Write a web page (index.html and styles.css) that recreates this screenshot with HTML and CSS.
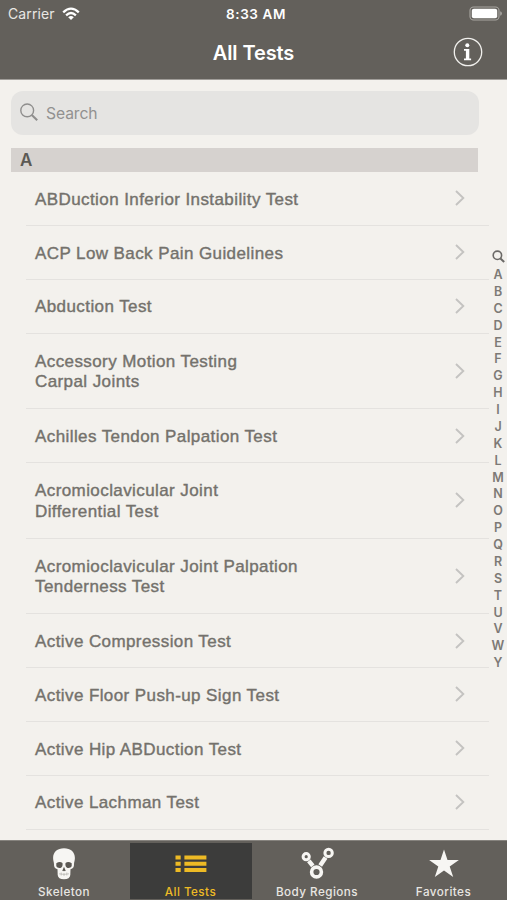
FILE: index.html
```html
<!DOCTYPE html>
<html lang="en">
<head>
<meta charset="utf-8">
<title>All Tests</title>
<link rel="stylesheet" href="styles.css">
</head>
<body>
<svg class="defs" width="0" height="0"><symbol id="chev" viewBox="0 0 12 18"><path d="M2 2l7.3 7L2 16" fill="none" stroke="#c4c3c1" stroke-width="1.9"/></symbol></svg>
<header class="header">
  <div class="status">
    <div class="carrier"><span>Carrier</span>
      <svg width="18" height="14" viewBox="0 0 18 14"><g fill="none" stroke="#fff" stroke-width="2.3"><path d="M1.2 5.3Q9 -2 16.8 5.3"/><path d="M4.1 8.3Q9 3.8 13.9 8.3"/></g><path d="M6.2 10.2Q9 8 11.8 10.2L9 13z" fill="#fff"/></svg>
    </div>
    <div class="time">8:33 AM</div>
    <svg class="battery" width="33" height="15" viewBox="0 0 33 15"><rect x="1" y="1" width="29" height="13" rx="3.6" fill="none" stroke="#a9a6a2" stroke-width="1.1"/><rect x="2.8" y="2.8" width="25.4" height="9.4" rx="2" fill="#fff"/><path d="M31.2 5.2q1.7 .6 1.7 2.3t-1.7 2.3z" fill="#a9a6a2"/></svg>
  </div>
  <div class="navbar">
    <h1>All Tests</h1>
    <svg class="info" width="30" height="30" viewBox="0 0 30 30"><circle cx="15" cy="15" r="13.7" fill="none" stroke="#f1f0ed" stroke-width="1.3"/><circle cx="14.3" cy="8.2" r="2" fill="#fff"/><path d="M11 12h5.3v9.4h1.8v1.8H11v-1.8h1.9v-7.6H11z" fill="#fff"/></svg>
  </div>
</header>
<main class="main">
  <section class="content">
    <div class="search"><svg width="20" height="20" viewBox="0 0 20 20" fill="none" stroke="#8f8e8d"><circle cx="7.2" cy="7.4" r="6.4" stroke-width="1.4"/><path d="M11.8 12l5.4 5.2" stroke-width="2.1"/></svg><span>Search</span></div>
    <h2>A</h2>
    <ul class="list">
      <li><span>ABDuction Inferior Instability Test</span><svg><use href="#chev"/></svg></li>
      <li><span>ACP Low Back Pain Guidelines</span><svg><use href="#chev"/></svg></li>
      <li><span>Abduction Test</span><svg><use href="#chev"/></svg></li>
      <li class="tall"><span>Accessory Motion Testing<br>Carpal Joints</span><svg><use href="#chev"/></svg></li>
      <li><span>Achilles Tendon Palpation Test</span><svg><use href="#chev"/></svg></li>
      <li class="tall"><span>Acromioclavicular Joint<br>Differential Test</span><svg><use href="#chev"/></svg></li>
      <li class="tall"><span>Acromioclavicular Joint Palpation<br>Tenderness Test</span><svg><use href="#chev"/></svg></li>
      <li><span>Active Compression Test</span><svg><use href="#chev"/></svg></li>
      <li><span>Active Floor Push-up Sign Test</span><svg><use href="#chev"/></svg></li>
      <li><span>Active Hip ABDuction Test</span><svg><use href="#chev"/></svg></li>
      <li><span>Active Lachman Test</span><svg><use href="#chev"/></svg></li>
    </ul>
  </section>
  <nav class="index">
    <svg width="13" height="13" viewBox="0 0 13 13" fill="none" stroke="#6b6967"><circle cx="5.4" cy="5.3" r="4.2" stroke-width="1.6"/><path d="M8.4 8.4l3.8 3.5" stroke-width="2"/></svg>
    <span>A</span><span>B</span><span>C</span><span>D</span><span>E</span><span>F</span><span>G</span><span>H</span><span>I</span><span>J</span><span>K</span><span>L</span><span>M</span><span>N</span><span>O</span><span>P</span><span>Q</span><span>R</span><span>S</span><span>T</span><span>U</span><span>V</span><span>W</span><span>Y</span>
  </nav>
</main>
<footer class="tabs">
  <div class="tab"><svg width="36" height="36" viewBox="0 0 36 36"><path d="M18 2.3C11.4 2.3 7.1 6 7.1 12c0 2.4.8 4 .9 6-.1 3.2.7 4.6 3.5 5.3l.2 5.6c.2 2.7 2.4 4.3 6.3 4.3s6.1-1.6 6.3-4.3l.2-5.6c2.8-.7 3.6-2.1 3.5-5.3.1-2 .9-3.6.9-6 0-6-4.3-9.7-10.9-9.7z" fill="#f7f6f3"/><g fill="#5b5853"><path d="M10.3 17.2q3.4-2.2 6.2-.3.6 3.8-2 5-3.3.4-4.2-1.7zM25.7 17.2q-3.4-2.2-6.2-.3-.6 3.8 2 5 3.3.4 4.2-1.7z"/><path d="M18 20.8l1.7 3.9q-.8.9-1.7 0-.9.9-1.7 0z"/></g><path d="M13 27.8q5 1.2 10 0M15.2 26.5v3M18 27v3M20.8 26.5v3" fill="none" stroke="#aaa7a2" stroke-width=".6"/></svg><span>Skeleton</span></div>
  <div class="tab active"><svg width="36" height="36" viewBox="0 0 36 36" fill="#edba25"><path d="M2.5 9.5h5.2v4H2.5zM11.4 9.5h22v4h-22zM2.5 15.7h5.2v4H2.5zM11.4 15.7h22v4h-22zM2.5 21.9h5.2v4H2.5zM11.4 21.9h22v4h-22z"/></svg><span>All Tests</span></div>
  <div class="tab"><svg width="36" height="36" viewBox="0 0 36 36" fill="none" stroke="#f7f6f3"><g stroke-width="3"><circle cx="7.2" cy="10.7" r="3.1"/><circle cx="29.6" cy="6.9" r="3.7"/><circle cx="17.5" cy="26" r="4.9" stroke-width="3.6"/></g><path d="M9.8 14.8l4 5M26.6 11.6l-5.4 8" stroke-width="4.4"/></svg><span>Body Regions</span></div>
  <div class="tab"><svg width="36" height="36" viewBox="0 0 36 36"><path d="M18 3.4l3.5 10.5h11.4l-9.2 6.6 3.5 10.6-9.2-6.5-9.2 6.5 3.5-10.6-9.2-6.6h11.4z" fill="#f7f6f3"/></svg><span>Favorites</span></div>
</footer>
</body>
</html>
```
FILE: styles.css
```css
* { box-sizing: border-box; }
body {
  margin: 0;
  width: 507px;
  height: 900px;
  overflow: hidden;
  display: flex;
  flex-direction: column;
  background: #f3f1ed;
  font-family: Inter, "Liberation Sans", sans-serif;
}
.defs { display: none; }
.header {
  height: 80px;
  flex: none;
  background: #63605b;
  border-bottom: 1px solid #a09d99;
  color: #fff;
}
.status {
  height: 27px;
  display: grid;
  grid-template-columns: 1fr auto 1fr;
  align-items: center;
  padding: 0 5px 0 8px;
}
.carrier { display: flex; align-items: center; gap: 7px; font-size: 14px; letter-spacing: .1px; color: #e9e7e4; }
.time { font-size: 13.5px; font-weight: 600; letter-spacing: .6px; padding-left: 2px; }
.battery { justify-self: end; }
.navbar {
  height: 51px;
  display: grid;
  grid-template-columns: 1fr auto 1fr;
  align-items: center;
  padding: 0 24px;
}
h1 { grid-column: 2; margin: 0; font-size: 20px; font-weight: 600; letter-spacing: -.1px; }
.info { justify-self: end; margin-bottom: 2px; }
.main { flex: 1; min-height: 0; display: flex; justify-content: space-between; }
.content { width: 489px; padding: 11px 0 0 11px; }
.search {
  width: 468px;
  height: 44px;
  border-radius: 12px;
  background: #e5e4e2;
  display: flex;
  align-items: center;
  gap: 6px;
  padding-left: 9px;
  color: #929190;
  font-size: 15.7px;
  letter-spacing: -.1px;
}
h2 {
  width: 467px;
  height: 24px;
  margin: 13px 0 0;
  padding-left: 9px;
  background: #d6d2cf;
  color: #5c5954;
  font: 600 17px/25px Inter, sans-serif;
}
.list { list-style: none; margin: 0 0 0 15px; padding: 0; }
.list li {
  height: 53.85px;
  display: flex;
  align-items: center;
  justify-content: space-between;
  padding: 0 23.5px 0 9px;
  border-bottom: 1px solid #e4e2df;
  color: #74716c;
  font: 17px/20.3px "Liberation Sans", sans-serif;
  -webkit-text-stroke: .4px #74716c;
  letter-spacing: .41px;
}
.list .tall { height: 75.6px; }
.list span { padding-top: 3px; }
.list svg { width: 12px; height: 18px; }
.index {
  width: 18px;
  padding-top: 170px;
  display: flex;
  flex-direction: column;
  align-items: center;
  color: #7d7a76;
  font-size: 12.5px;
  font-weight: 600;
  line-height: 16.87px;
}
.index svg { margin-bottom: 4px; flex: none; }
.tabs {
  height: 60px;
  flex: none;
  display: grid;
  grid-template-columns: repeat(4, 122px);
  column-gap: 4.5px;
  padding: 2px 3px 1px;
  background: #63605b;
  border-top: 1px solid #86837e;
}
.tab {
  display: flex;
  flex-direction: column;
  align-items: center;
  padding-top: 3px;
  color: #e8e6e2;
  font-size: 11.7px;
  font-weight: 500;
  line-height: 14px;
  letter-spacing: .45px;
}
.tab span { margin-top: 3px; }
.active { background: #3c3c3b; color: #edba25; }
```
